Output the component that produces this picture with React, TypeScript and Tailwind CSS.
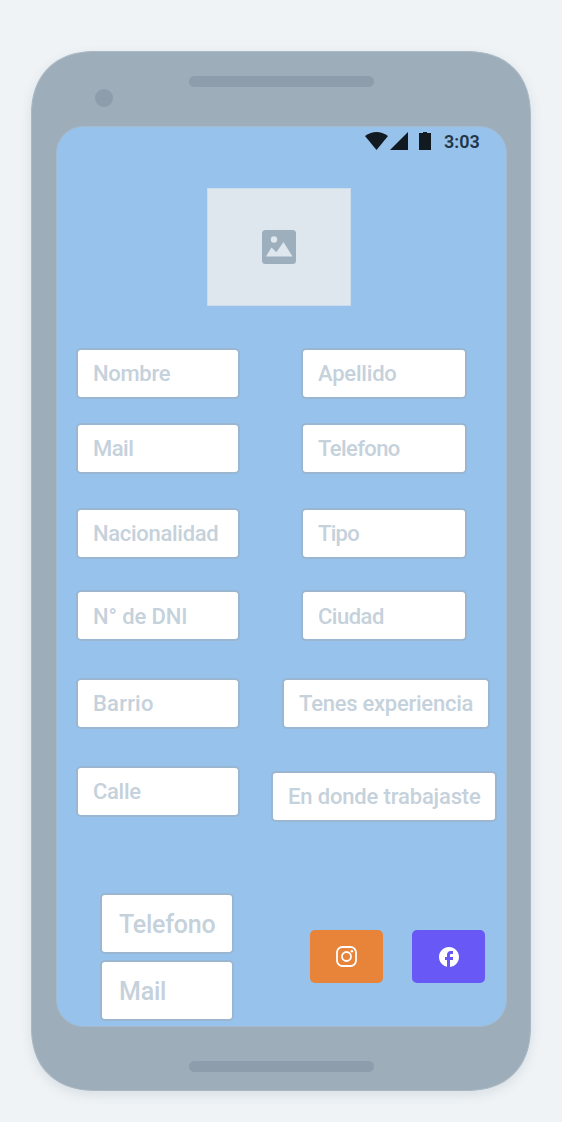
import React from "react";
import { MdFacebook } from "react-icons/md";

type FieldProps = { label: string; box?: string; text?: string };

function Field({ label, box = "h-[51px] w-[164px] pl-[15px]", text = "text-[22px] tracking-[-0.3px]" }: FieldProps) {
  return (
    <div className={`flex shrink-0 items-center rounded-[5px] border-2 border-[#9bb6d0] bg-white ${box}`}>
      <span className={`whitespace-nowrap font-medium leading-none text-[#c5d1db] ${text}`}>{label}</span>
    </div>
  );
}

function StatusBar() {
  return (
    <div className="flex h-[28px] items-center pl-[308px] text-[#111a21]">
      <svg className="h-[18px] w-[23px]" viewBox="0 0 23 18" fill="currentColor">
        <path d="M0 4Q11.5-4 23 4L11.5 18Z" />
      </svg>
      <svg className="ml-[2px] h-[18px] w-[18px]" viewBox="0 0 18 18" fill="currentColor">
        <path d="M18 0V18H0Z" />
      </svg>
      <svg className="ml-[11px] h-[18px] w-[12px]" viewBox="0 0 12 18" fill="currentColor">
        <path d="M0 1H4V0H8V1H12V18H0Z" />
      </svg>
      <span className="ml-[13px] pt-px text-[18px] font-semibold leading-none text-[#233646]">3:03</span>
    </div>
  );
}

export default function App() {
  return (
    <main className="flex h-[1122px] w-[562px] flex-col overflow-hidden bg-[#eff3f6] pl-[31px] pt-[51px] font-['Roboto','Liberation_Sans',sans-serif]">
      <div className="flex h-[1040px] w-[500px] shrink-0 flex-col rounded-[58px] border border-[#a9b8c4] bg-[#9dadb9] shadow-[0_4px_12px_rgba(60,80,100,0.12)] supports-[corner-shape:squircle]:rounded-[65px] supports-[corner-shape:squircle]:[corner-shape:superellipse(1.2)]">
        <header className="flex h-[74px] shrink-0 items-start">
          <i className="ml-[63px] mt-[37px] h-[18px] w-[18px] rounded-full bg-[#8e9dac]" />
          <i className="ml-[76px] mt-[24px] h-[11px] w-[185px] rounded-full bg-[#8e9dac]" />
        </header>

        <section className="ml-[24px] flex h-[901px] w-[451px] shrink-0 flex-col overflow-hidden rounded-[27px] border border-[#a5bacd] bg-[#96c2eb]">
          <StatusBar />
          <div className="ml-[150px] mt-[33px] flex h-[118px] w-[144px] shrink-0 items-center justify-center border border-[#cddced] bg-[#dee6ee]">
            <svg className="h-[34px] w-[34px]" viewBox="0 0 34 34">
              <rect width="34" height="34" rx="3.5" fill="#9dafbc" />
              <circle cx="12" cy="9.5" r="3.2" fill="#dee6ee" />
              <path d="M4 26.5L9.5 17.5L14.3 22.3L21.5 12L30.5 26.5Z" fill="#dee6ee" />
            </svg>
          </div>

          <div className="mt-[42px] flex h-[475px] shrink-0 pl-[19px]">
            <div className="flex w-[164px] flex-col">
              <Field label="Nombre" />
              <div className="h-[24px]" />
              <Field label="Mail" text="text-[22px] tracking-[-0.5px]" />
              <div className="h-[34px]" />
              <Field label="Nacionalidad" />
              <div className="h-[31px]" />
              <Field label="N° de DNI" text="text-[22px] tracking-[-0.1px] pt-[2px]" />
              <div className="h-[37px]" />
              <Field label="Barrio" text="text-[22px] tracking-[0.2px]" />
              <div className="h-[37px]" />
              <Field label="Calle" />
            </div>
            <div className="ml-[31px] flex w-[226px] flex-col">
              <div className="flex flex-col pl-[30px]">
                <Field label="Apellido" box="h-[51px] w-[166px] pl-[15px]" text="text-[22px] tracking-[-0.2px]" />
                <div className="h-[24px]" />
                <Field label="Telefono" box="h-[51px] w-[166px] pl-[15px]" text="text-[22px] tracking-[-0.6px]" />
                <div className="h-[34px]" />
                <Field label="Tipo" box="h-[51px] w-[166px] pl-[15px]" text="text-[22px] tracking-[-0.7px]" />
                <div className="h-[31px]" />
                <Field label="Ciudad" box="h-[51px] w-[166px] pl-[15px]" text="text-[22px] tracking-[-0.5px] pt-[2px]" />
              </div>
              <div className="flex flex-col pl-[11px] pt-[37px]">
                <Field label="Tenes experiencia" box="h-[51px] w-[208px] pl-[15px]" text="text-[22px] tracking-[-0.25px]" />
              </div>
              <div className="h-[42px]" />
              <Field label="En donde trabajaste" box="h-[51px] w-[226px] pl-[15px]" text="text-[22px] tracking-[-0.15px]" />
            </div>
          </div>

          <footer className="mt-[70px] flex shrink-0 items-start pl-[43px]">
            <div className="flex flex-col gap-[6px]">
              <Field label="Telefono" box="h-[61px] w-[134px] pl-[17px]" text="text-[25px] tracking-[-0.25px] pt-[2px]" />
              <Field label="Mail" box="h-[61px] w-[134px] pl-[17px]" text="text-[25px] tracking-[-0.2px] pt-[2px]" />
            </div>
            <div className="ml-[76px] mt-[37px] flex gap-[29px]">
              <button className="flex h-[53px] w-[73px] items-center justify-center rounded-[5px] bg-[#e78439]">
                <svg className="h-[21px] w-[21px]" viewBox="0 0 21 21" fill="none" stroke="#fff" strokeWidth="1.8">
                  <rect x="1" y="1" width="19" height="19" rx="5.4" />
                  <circle cx="10.5" cy="10.5" r="4.5" />
                  <circle cx="15.9" cy="5.2" r="1.25" fill="#fff" stroke="none" />
                </svg>
              </button>
              <button className="flex h-[53px] w-[73px] items-center justify-center rounded-[5px] bg-[#6858f6] text-white">
                <MdFacebook size={24} />
              </button>
            </div>
          </footer>
        </section>

        <i className="ml-[157px] mt-[34px] h-[11px] w-[185px] shrink-0 rounded-full bg-[#8e9dac]" />
      </div>
    </main>
  );
}
